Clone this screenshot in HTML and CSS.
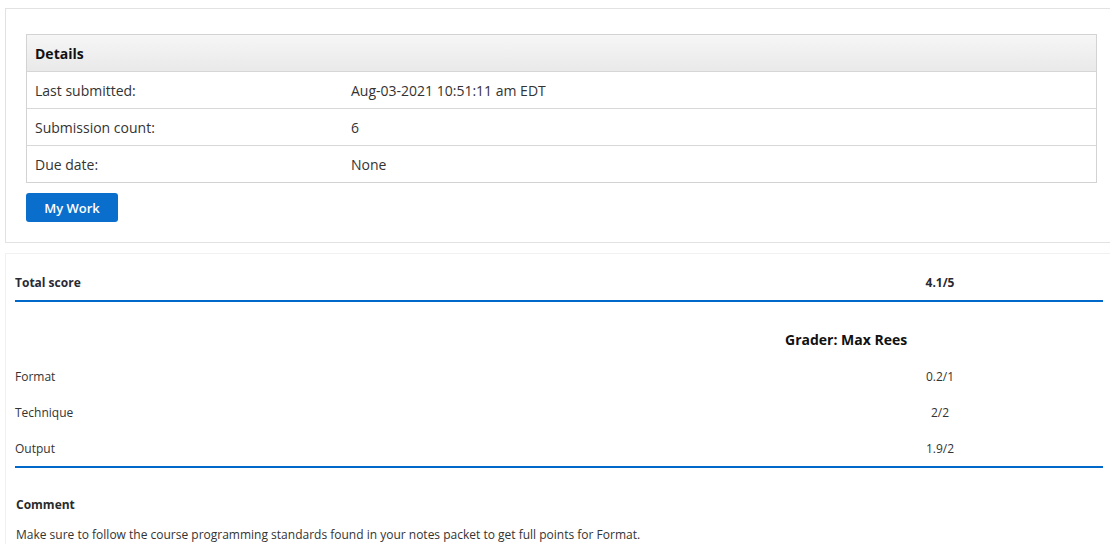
FILE: index.html
```html
<!DOCTYPE html>
<html>
<head>
<meta charset="utf-8">
<link rel="stylesheet" href="styles.css">
</head>
<body>
<section class="panel">
  <div class="details">
    <div class="details-head">Details</div>
    <div class="details-row"><div class="lbl">Last submitted:</div><div class="val">Aug-03-2021 10:51:11 am EDT</div></div>
    <div class="details-row"><div class="lbl">Submission count:</div><div class="val">6</div></div>
    <div class="details-row"><div class="lbl">Due date:</div><div class="val">None</div></div>
  </div>
  <button class="btn">My Work</button>
</section>
<section class="scores">
  <div class="score-table">
    <div class="total-row">
      <div class="name">Total score</div>
      <div class="score">4.1/5</div>
    </div>
    <div class="grader-row">
      <div class="name"></div>
      <div class="grader">Grader: Max Rees</div>
    </div>
    <div class="crit-row"><div class="name">Format</div><div class="score">0.2/1</div></div>
    <div class="crit-row"><div class="name">Technique</div><div class="score">2/2</div></div>
    <div class="crit-row last"><div class="name">Output</div><div class="score">1.9/2</div></div>
  </div>
  <div class="comment">
    <h4 class="comment-title">Comment</h4>
    <p class="comment-text">Make sure to follow the course programming standards found in your notes packet to get full points for Format.</p>
  </div>
</section>
</body>
</html>
```
FILE: styles.css
```css
* { box-sizing: border-box; }
html, body { margin: 0; padding: 0; background: #fff; }
body {
  font-family: "Open Sans", "Liberation Sans", sans-serif;
  color: #333;
  width: 1110px;
  height: 556px;
  overflow: hidden;
}
.panel {
  margin: 8px 0 0 5px;
  border: 1px solid #e2e2e2;
  border-right: none;
  padding: 25px 13px 20px 20px;
}
.details {
  border: 1px solid #d3d3d3;
}
.details-head {
  height: 37px;
  border-bottom: 1px solid #d6d6d6;
  background: linear-gradient(#f6f6f6, #e9e9e9);
  font-weight: 700;
  font-size: 14px;
  color: #111;
  line-height: 34px;
  padding: 2px 0 0 8px;
}
.details-row {
  display: grid;
  grid-template-columns: 316px 1fr;
  height: 37px;
  border-bottom: 1px solid #d8d8d8;
  font-size: 14px;
  line-height: 34px;
  padding-top: 2px;
  color: #333;
}
.details-row:last-child { border-bottom: none; height: 36px; }
.lbl { padding-left: 8px; }
.val { padding-left: 8px; }
.btn {
  display: block;
  margin-top: 10px;
  width: 92px;
  height: 29px;
  border: none;
  border-radius: 3px;
  background: #0a6ecc;
  color: #fff;
  font-family: "Open Sans", "Liberation Sans", sans-serif;
  font-weight: 600;
  font-size: 13px;
  padding: 0;
  cursor: pointer;
}
.scores {
  margin: 10px 0 0 5px;
  border-top: 1px solid #f1f1f1;
  border-left: 1px solid #f1f1f1;
  padding: 20px 7px 0 9px;
}
.score-table { font-size: 12px; }
.total-row, .grader-row, .crit-row {
  display: grid;
  grid-template-columns: 762px 1fr;
  align-items: center;
}
.total-row {
  font-weight: 700;
  line-height: 18px;
  padding-bottom: 8px;
  border-bottom: 2px solid #0068c9;
  color: #2a2a33;
}
.score { text-align: center; }
.grader-row {
  padding: 28px 0 8px;
  line-height: 20px;
}
.grader {
  padding-left: 8px;
  font-size: 14px;
  font-weight: 700;
  color: #111;
}
.crit-row {
  height: 36px;
  color: #333;
}
.crit-row.last {
  height: 38px;
  border-bottom: 2px solid #0068c9;
}
.comment { padding-left: 1px; }
.comment-title {
  margin: 28px 0 0;
  font-size: 12px;
  font-weight: 700;
  line-height: 17px;
  color: #2b2b2b;
}
.comment-text {
  margin: 13px 0 0;
  font-size: 12px;
  line-height: 18px;
  color: #333;
}
```
